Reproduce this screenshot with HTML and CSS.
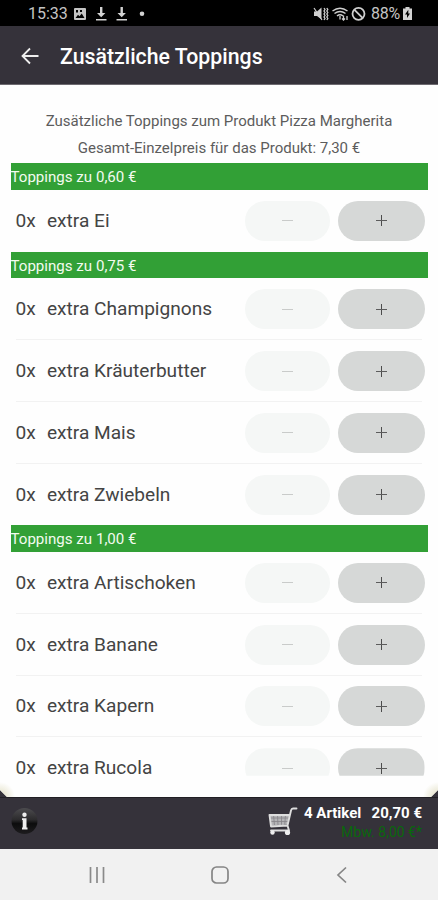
FILE: index.html
```html
<!DOCTYPE html>
<html lang="de">
<head>
<meta charset="utf-8">
<title>Zusätzliche Toppings</title>
<link rel="stylesheet" href="styles.css">
</head>
<body>
<div class="status">
  <span class="clock">15:33</span>
  <svg class="status-left" width="74" height="16" viewBox="0 0 74 16">
    <path fill="#c4c4c4" fill-rule="evenodd" d="M2 2h10q1 0 1 1v10q0 1-1 1H2q-1 0-1-1V3q0-1 1-1zM2.500 12h9L8.700 7.500 6.500 10.300 5 8.800zM3 4v2.500h2V4zM7 4v2h2V4z"/>
    <path fill="#d2d2d2" d="M27 1h2.400v6h3L28.200 11.200 24 7h3zM23 13h10.500v1.500H23zM47.500 1h2.400v6h3l-4.200 4.200L44.500 7h3zM43.500 13H54v1.500H43.500z"/>
    <circle cx="69" cy="7.800" r="2.300" fill="#d2d2d2"/>
  </svg>
  <svg class="status-right" width="54" height="16" viewBox="0 0 54 16">
    <g fill="none" stroke="#cfcfcf" stroke-width="1.500">
      <path fill="#cfcfcf" stroke="none" d="M1 5.500h3L8.500 1.500v12L4 10H1z"/>
      <path stroke-width="1.200" d="M1 2l8 12"/>
      <path stroke-width="1.300" d="M11 2l1 1.500-1 1.500 1 1.500L11 8l1 1.500-1 1.500 1 1.500-1 1.500M13.800 2l1 1.500-1 1.500 1 1.500-1 1.500 1 1.500-1 1.500 1 1.500-1 1.500"/>
      <path d="M19.500 5q7.500-5.500 15 0M21.500 7.500q5.500-4 11 0M24 10q3-2.300 6 0"/>
      <path stroke-width="1.300" d="M27 10v3.500M30.500 9.500v4m-1.500-1l1.500 1.500 1.500-1.500M34 14v-4"/>
      <circle cx="45.500" cy="7.800" r="6" stroke-width="1.800"/>
      <path stroke-width="1.800" d="M41.500 3.800l8 8"/>
    </g>
  </svg>
  <span class="percent">88%</span>
  <svg class="battery" width="9" height="13" viewBox="0 0 9 13">
    <path fill="#d2d2d2" fill-rule="evenodd" d="M2.500 0h4v1.500H9V13H0V1.500h2.500zM5.300 2.800L2 7.500h2V11l3-4.500H5.300z"/>
  </svg>
</div>
<header class="appbar">
  <svg class="back" width="18" height="18" viewBox="0 0 18 18"><path d="M17.500 9H1.500M9 1.500L1.500 9 9 16.500" fill="none" stroke="#eee" stroke-width="1.800"/></svg>
  <h1>Zusätzliche Toppings</h1>
</header>
<main class="page">
  <div class="scroll">
    <div class="intro"><p class="product">Zusätzliche Toppings zum Produkt Pizza Margherita</p><p class="sum">Gesamt-Einzelpreis für das Produkt: 7,30 €</p></div>
    <h2>Toppings zu 0,60 €</h2>
    <ul>
      <li><span class="count">0x</span><span class="name">extra Ei</span><button class="minus" disabled><i></i></button><button class="plus"><i></i></button></li>
    </ul>
    <h2>Toppings zu 0,75 €</h2>
    <ul>
      <li><span class="count">0x</span><span class="name">extra Champignons</span><button class="minus" disabled><i></i></button><button class="plus"><i></i></button></li>
      <li><span class="count">0x</span><span class="name">extra Kräuterbutter</span><button class="minus" disabled><i></i></button><button class="plus"><i></i></button></li>
      <li><span class="count">0x</span><span class="name">extra Mais</span><button class="minus" disabled><i></i></button><button class="plus"><i></i></button></li>
      <li><span class="count">0x</span><span class="name">extra Zwiebeln</span><button class="minus" disabled><i></i></button><button class="plus"><i></i></button></li>
    </ul>
    <h2>Toppings zu 1,00 €</h2>
    <ul>
      <li><span class="count">0x</span><span class="name">extra Artischoken</span><button class="minus" disabled><i></i></button><button class="plus"><i></i></button></li>
      <li><span class="count">0x</span><span class="name">extra Banane</span><button class="minus" disabled><i></i></button><button class="plus"><i></i></button></li>
      <li><span class="count">0x</span><span class="name">extra Kapern</span><button class="minus" disabled><i></i></button><button class="plus"><i></i></button></li>
      <li class="partial"><span class="count">0x</span><span class="name">extra Rucola</span><button class="minus" disabled><i></i></button><button class="plus"><i></i></button></li>
    </ul>
  </div>
</main>
<footer class="cartbar">
  <svg class="info" width="28" height="28" viewBox="0 0 28 28">
    <defs><linearGradient id="ball" x1="0" y1="0" x2="0" y2="1"><stop offset="0" stop-color="#4c4b4e"/><stop offset=".45" stop-color="#2c2b2d"/><stop offset=".6" stop-color="#0c0c0d"/><stop offset="1" stop-color="#1d1c1e"/></linearGradient></defs>
    <circle cx="14.500" cy="14" r="13" fill="url(#ball)"/>
    <circle cx="14.500" cy="7.700" r="2.200" fill="#eee"/>
    <path fill="#eee" d="M12 11.200h4.500v9.300h1v2H12v-2h.7v-7.500H12z"/>
  </svg>
  <svg class="cart" width="30" height="30" viewBox="0 0 30 30">
    <path fill="#b4b4b6" d="M1.500 8h20.500l-2 9.500L3 19z"/>
    <path d="M5.500 8l1 10.500M9.500 8l.5 10M13.500 8v10M17.500 8l-.8 10M2 11h19M2.500 14.500h18" stroke="#858388" stroke-width=".8" fill="none"/>
    <path d="M28.500 1.500h-3.500q-1.500 0-2 2L19.500 18.500 3 19.500 1.500 8H22M19.500 18.500l1.500 5H3" fill="none" stroke="#dedede" stroke-width="1.900" stroke-linejoin="round" stroke-linecap="round"/>
    <circle cx="4.500" cy="25.500" r="2.200" fill="#eee"/><circle cx="19.500" cy="25.500" r="2.600" fill="#eee"/>
  </svg>
  <div class="totals">
    <div class="total"><span class="items">4 Artikel</span><span class="price">20,70 €</span></div>
    <div class="minimum">Mbw. 8,00 €*</div>
  </div>
</footer>
<nav class="sysnav">
  <svg width="18" height="18" viewBox="0 0 18 18"><path d="M2.500 1v16M9 1v16M15.500 1v16" stroke="#8a8a8a" stroke-width="1.700"/></svg>
  <svg width="18" height="18" viewBox="0 0 18 18"><rect x="1" y="1" width="16" height="16" rx="4.500" fill="none" stroke="#858585" stroke-width="1.700"/></svg>
  <svg width="18" height="18" viewBox="0 0 18 18"><path d="M13 1.500L5 9l8 7.500" fill="none" stroke="#858585" stroke-width="1.700"/></svg>
</nav>
</body>
</html>
```
FILE: styles.css
```css
* { box-sizing: border-box; margin: 0; padding: 0; }
body { width: 438px; height: 900px; overflow: hidden; display: flex; flex-direction: column; background: #35323a; font-family: Roboto, "Liberation Sans", sans-serif; color: #444; }
.status { height: 26px; flex: none; background: #000; display: flex; align-items: center; padding: 1px 26px 0 28px; color: #c4c4c4; font-size: 16px; line-height: 24px; }
.clock { width: 45px; padding-top: 1px; }
.status-right { margin-left: auto; margin-right: 4px; }
.percent { width: 31px; padding-top: 1px; letter-spacing: -.2px; }
.battery { margin-left: 1px; }
.appbar { height: 59px; flex: none; background: #35323a; border-bottom: 1px solid #6d6a70; display: flex; align-items: center; padding: 2px 0 0 21px; }
.back { margin-right: 21px; }
h1 { font-size: 21.300px; line-height: 28px; padding-top: 1px; font-weight: 500; color: #fff; white-space: nowrap; }
.page { height: 712px; flex: none; background: radial-gradient(circle at 0 100%, #ecead8 6px, transparent 15px), radial-gradient(circle at 100% 100%, #ecead8 6px, transparent 15px), #fefefe; padding: 0 10.500px 21.500px; clip-path: polygon(0 0, 100% 0, 100% 705px, 431px 100%, 7px 100%, 0 705px); }
.scroll { height: 690.500px; }
.intro { height: 78.300px; padding-top: 23px; text-align: center; font-size: 15px; line-height: 26.500px; color: #5c5c5c; }
.intro p { white-space: nowrap; }
h2 { height: 26.700px; background: #32a036; color: #f3fbf0; font-size: 15.100px; font-weight: 400; line-height: 28px; white-space: nowrap; }
ul { list-style: none; }
li { height: 61.750px; display: flex; align-items: center; margin-right: 6px; margin-left: 5px; padding-top: 1px; border-bottom: 1px solid #f2f2f2; font-size: 19.100px; line-height: 16px; }
li:last-child { border-bottom-color: transparent; }
.count { width: 31.500px; }
.name { flex: 1; white-space: nowrap; }
button { height: 40px; border: 0; border-radius: 20px; display: grid; place-items: center; }
button i { grid-area: 1 / 1; display: block; width: 11px; height: 1px; }
.minus { width: 85px; background: #f5f7f6; margin-right: 7.500px; }
.minus i { background: #c9cbca; }
.plus { width: 87px; background: #d6d8d7; margin-right: -3px; }
.plus i { width: 11px; height: 11px; background: linear-gradient(#5c5c5c, #5c5c5c) center / 11px 1px no-repeat, linear-gradient(#4c4c4c, #4c4c4c) center / 1px 11px no-repeat; }
/* The last visible row ends at the list's lower edge */
.partial button { clip-path: inset(0 0 12.500px 0); }
.cartbar { height: 52px; flex: none; border-top: 1px solid #211f24; display: flex; align-items: flex-start; padding: 5px 16px 0 10px; background: #35323a; }
.info { margin-top: 4px; }
.cart { margin-left: auto; margin-top: 4px; margin-right: 6px; }
.totals { width: 118px; text-align: right; white-space: nowrap; }
.total { display: flex; justify-content: space-between; font-size: 15px; line-height: 20px; font-weight: 700; color: #fff; }
.minimum { font-size: 14px; line-height: 19px; color: #09680c; font-weight: 400; }
.sysnav { height: 51px; flex: none; background: #f1f1f1; display: flex; justify-content: space-between; align-items: center; padding: 1px 87px 0 88px; }
```
